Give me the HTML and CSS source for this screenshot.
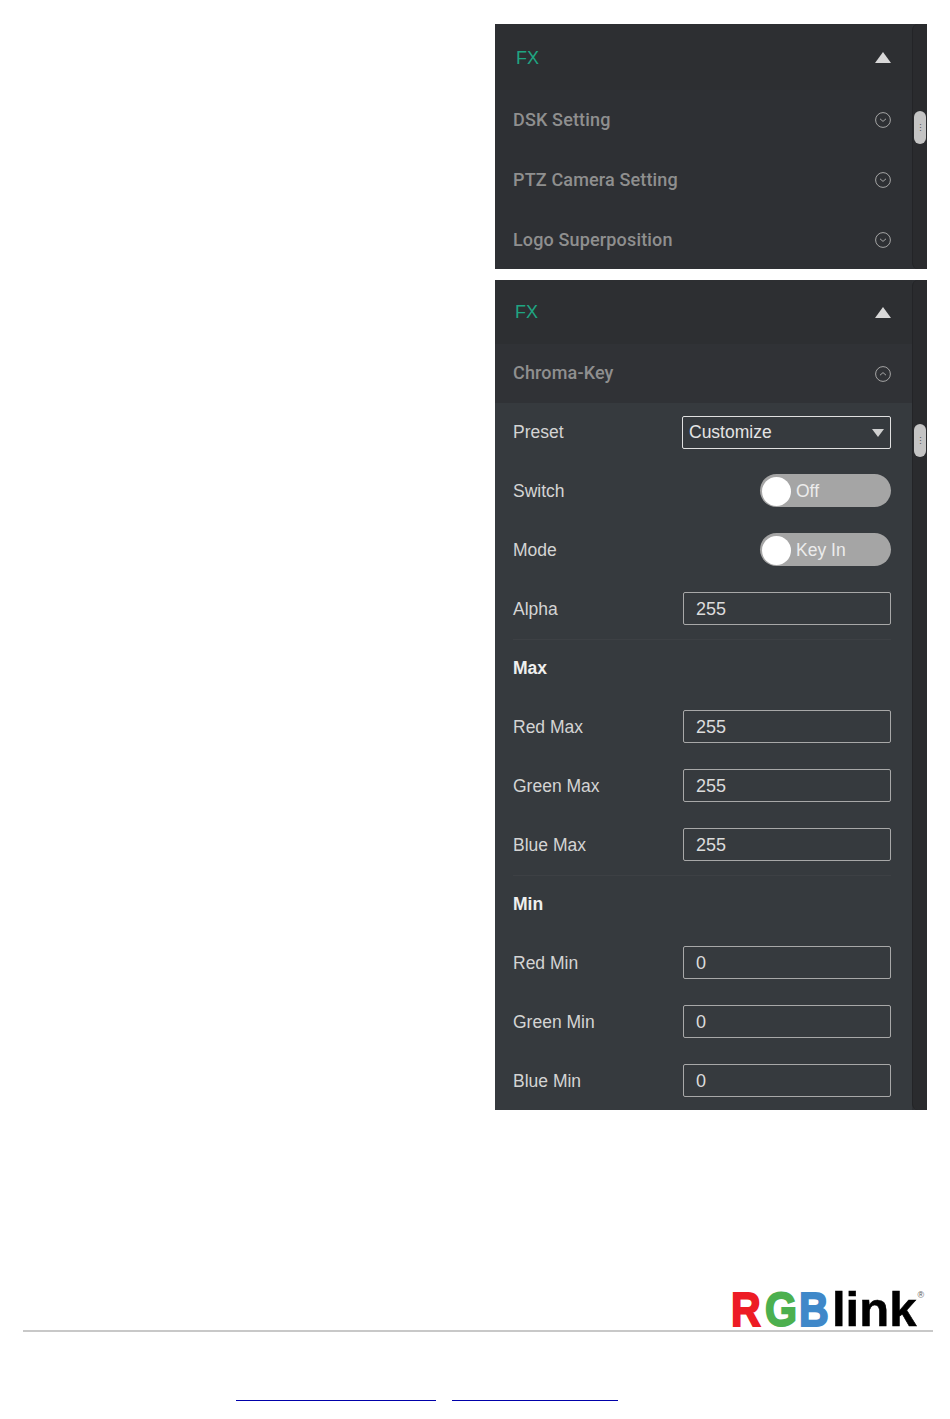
FILE: index.html
```html
<!DOCTYPE html>
<html lang="en">
  <head>
    <meta charset="UTF-8" />
    <meta name="viewport" content="width=device-width, initial-scale=1" />
    <title>FX Settings</title>
    <link rel="stylesheet" href="styles.css">
  </head>

  <body>
    <div class="panels">
      <!-- collapsed FX panel -->
      <section class="panel panelShort">
        <div class="panelMain">
          <div class="fxHeader">
            <span class="fxTitle">FX</span>
            <span class="triangleUp"></span>
          </div>
          <div class="group">
            <span>DSK Setting</span>
            <svg class="chevron" viewBox="0 0 16 16"><circle cx="8" cy="8" r="7.4"/><path d="M5 6.8 8 9.4 11 6.8"/></svg>
          </div>
          <div class="group">
            <span>PTZ Camera Setting</span>
            <svg class="chevron" viewBox="0 0 16 16"><circle cx="8" cy="8" r="7.4"/><path d="M5 6.8 8 9.4 11 6.8"/></svg>
          </div>
          <div class="group">
            <span>Logo Superposition</span>
            <svg class="chevron" viewBox="0 0 16 16"><circle cx="8" cy="8" r="7.4"/><path d="M5 6.8 8 9.4 11 6.8"/></svg>
          </div>
        </div>
        <div class="scrollTrack"><span class="scrollThumb thumbShort">⋮</span></div>
      </section>

      <!-- expanded chroma key panel -->
      <section class="panel panelTall">
        <div class="panelMain">
          <div class="fxHeader fxHeaderTall">
            <span class="fxTitle">FX</span>
            <span class="triangleUp"></span>
          </div>
          <div class="group groupOpen">
            <span>Chroma-Key</span>
            <svg class="chevron" viewBox="0 0 16 16"><circle cx="8" cy="8" r="7.4"/><path d="M5 9.2 8 6.6 11 9.2"/></svg>
          </div>
          <div class="settings">
            <div class="row">
              <span>Preset</span>
              <div class="field fieldSelect">Customize<span class="triangleDown"></span></div>
            </div>
            <div class="row">
              <span>Switch</span>
              <div class="toggle"><span class="knob"></span>Off</div>
            </div>
            <div class="row">
              <span>Mode</span>
              <div class="toggle"><span class="knob"></span>Key In</div>
            </div>
            <div class="row">
              <span>Alpha</span>
              <div class="field">255</div>
            </div>
            <div class="row rowHeading"><span>Max</span></div>
            <div class="row">
              <span>Red Max</span>
              <div class="field">255</div>
            </div>
            <div class="row">
              <span>Green Max</span>
              <div class="field">255</div>
            </div>
            <div class="row">
              <span>Blue Max</span>
              <div class="field">255</div>
            </div>
            <div class="row rowHeading"><span>Min</span></div>
            <div class="row">
              <span>Red Min</span>
              <div class="field">0</div>
            </div>
            <div class="row">
              <span>Green Min</span>
              <div class="field">0</div>
            </div>
            <div class="row">
              <span>Blue Min</span>
              <div class="field">0</div>
            </div>
          </div>
        </div>
        <div class="scrollTrack"><span class="scrollThumb thumbTall">⋮</span></div>
      </section>
    </div>

    <footer class="pageFooter">
      <div class="logo">
        <span class="logoLetter logoRed">R</span><span class="logoLetter logoGreen">G</span><span class="logoLetter logoBlue">B</span><span class="logoBlack">link</span><span class="logoMark">®</span>
      </div>
      <div class="footerLine"></div>
      <div class="footerLinks">
        <a class="linkOne" href="#"></a>
        <a class="linkTwo" href="#"></a>
      </div>
    </footer>
  </body>
</html>
```

FILE: styles.css
```css
* {
  margin: 0;
  padding: 0;
  box-sizing: border-box;
}

html,
body {
  background-color: #fff;
  font-family: "Liberation Sans", Arial, sans-serif;
}

body {
  height: 1419px;
  overflow: hidden;
  padding-top: 24px;
}

.panels {
  display: flex;
  flex-direction: column;
  align-items: flex-end;
  gap: 11px;
  padding-right: 23px;
}

.panel {
  width: 432px;
  display: flex;
  overflow: hidden;
  background-color: #2e3034;
}

.panelShort {
  height: 245px;
}

.panelTall {
  height: 830px;
}

.panelMain {
  flex: 1;
  min-width: 0;
}

.fxHeader {
  height: 66px;
  display: flex;
  align-items: center;
  justify-content: space-between;
  padding: 0 21px;
  background-color: #2d2f32;
}

.fxHeaderTall {
  height: 64px;
  padding-left: 20px;
}

.fxTitle {
  padding-top: 2px;
  font-size: 18px;
  color: #1fa582;
}

.fxHeaderTall .fxTitle {
  padding-top: 0;
}

.triangleUp {
  width: 0;
  height: 0;
  border-left: 8px solid transparent;
  border-right: 8px solid transparent;
  border-bottom: 11px solid #d8d8d8;
}

.group {
  height: 60px;
  display: flex;
  align-items: center;
  justify-content: space-between;
  padding: 0 21px 0 18px;
  font-family: Roboto, "Liberation Sans", sans-serif;
  font-size: 18px;
  font-weight: 500;
  letter-spacing: 0.15px;
  color: #8f8f8f;
}

.group span {
  padding-bottom: 2px;
}

.groupOpen {
  height: 59px;
  background-color: #303236;
}

.chevron {
  width: 16px;
  height: 16px;
  fill: none;
  stroke: #a5a5a5;
  stroke-width: 1;
}

.settings {
  background-color: #363a3e;
}

.row {
  height: 59px;
  display: flex;
  align-items: center;
  justify-content: space-between;
  padding: 0 21px 0 18px;
  font-size: 17.5px;
  color: #d4d4d4;
}

.rowHeading {
  position: relative;
  font-weight: 700;
  color: #efefef;
}

.rowHeading:before {
  content: "";
  position: absolute;
  top: 0;
  left: 18px;
  right: 21px;
  height: 1px;
  background-color: #3d4044;
}

.field {
  width: 208px;
  height: 33px;
  display: flex;
  align-items: center;
  margin-top: -2px;
  padding: 2px 0 0 12px;
  border: 1px solid #a8a8a8;
  border-radius: 2px;
  font-size: 18px;
  color: #dcdcdc;
}

.fieldSelect {
  width: 209px;
  margin-top: 0;
  padding: 0 6px;
  justify-content: space-between;
  border-color: #e0e0e0;
  font-size: 17.5px;
  color: #e4e4e4;
}

.triangleDown {
  width: 0;
  height: 0;
  border-left: 6px solid transparent;
  border-right: 6px solid transparent;
  border-top: 8px solid #d0d0d0;
}

.toggle {
  width: 131px;
  height: 33px;
  display: flex;
  align-items: center;
  gap: 5px;
  margin-top: -2px;
  padding: 2px 0 0 2px;
  border-radius: 17px;
  background-color: #a5a5a5;
  font-size: 17.5px;
  color: #ececec;
}

.knob {
  width: 29px;
  height: 29px;
  border-radius: 50%;
  background-color: #fff;
}

.scrollTrack {
  position: relative;
  width: 15px;
  border-left: 1px solid #232427;
  border-radius: 6px 0 0 6px;
  background-color: #2a2b2e;
}

.scrollThumb {
  position: absolute;
  left: 1px;
  width: 12px;
  height: 33px;
  display: flex;
  align-items: center;
  justify-content: center;
  border-radius: 6px;
  background-color: #c4c4c4;
  font-size: 9px;
  color: #555;
}

.thumbShort {
  top: 87px;
}

.thumbTall {
  top: 144px;
}

.pageFooter {
  padding-top: 180px;
}

.logo {
  height: 38px;
  margin-left: 731px;
  display: flex;
  align-items: flex-end;
  font-weight: 700;
  font-size: 49px;
  line-height: 38px;
  white-space: nowrap;
}

.logoLetter {
  display: block;
  width: 34px;
  transform: scaleX(0.84);
  transform-origin: left center;
  -webkit-text-stroke: 2px currentColor;
}

.logoRed {
  color: #ed1c24;
}

.logoGreen {
  color: #4cb04f;
}

.logoBlue {
  color: #3f88c9;
}

.logoBlack {
  margin-left: -1px;
  color: #000;
  -webkit-text-stroke: 0.6px #000;
}

.logoMark {
  align-self: flex-start;
  margin-left: 1px;
  font-size: 9px;
  font-weight: 400;
  line-height: 10px;
  color: #555;
}

.footerLine {
  height: 2px;
  margin: 2px 17px 0 23px;
  background-color: #c8c8c8;
}

.footerLinks {
  display: flex;
  gap: 16px;
  margin-top: 68px;
  padding-left: 236px;
}

.footerLinks a {
  display: block;
  height: 1px;
  background-color: #0000aa;
}

.linkOne {
  width: 200px;
}

.linkTwo {
  width: 166px;
}
```
